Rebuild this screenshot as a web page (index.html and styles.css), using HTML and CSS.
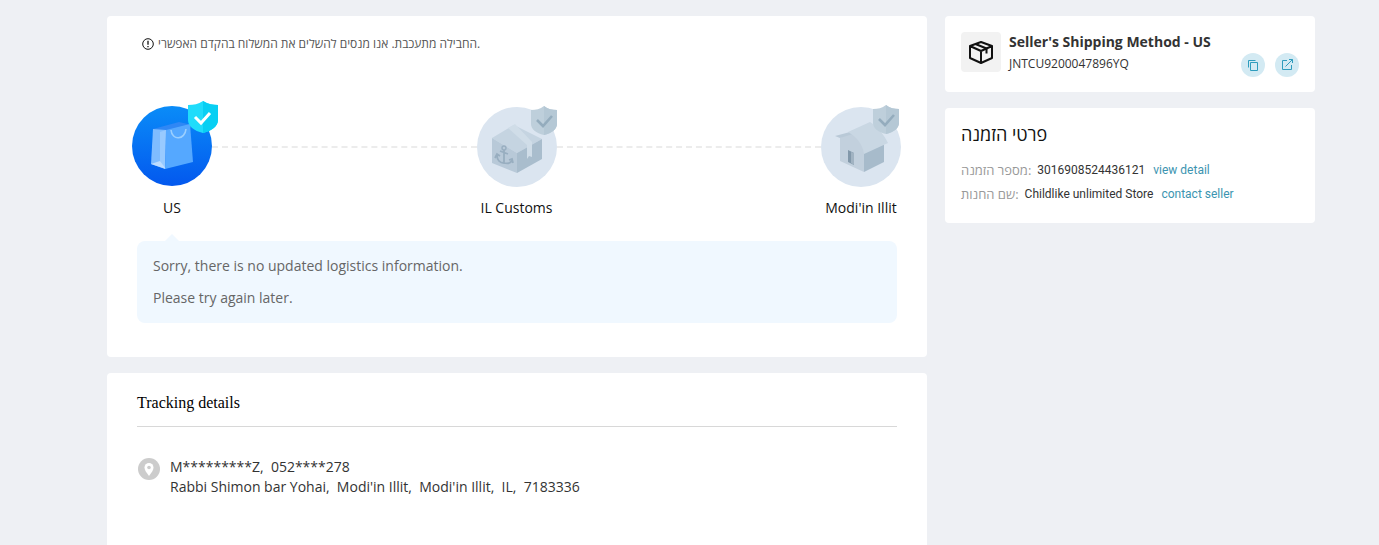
FILE: index.html
```html
<!DOCTYPE html>
<html lang="en">
<head>
  <meta charset="UTF-8" />
  <meta name="viewport" content="width=device-width, initial-scale=1.0"/>
  <title>Tracking details</title>
  <link rel="stylesheet" href="styles.css">
</head>
<body>
  <div class="page">
    <main class="main">
      <section class="card status">
        <p class="notice">
          <svg class="notice-icon" viewBox="0 0 12 12" fill="none" stroke="#111">
            <circle cx="6" cy="6" r="5.3"/>
            <path d="M6 2.8v4M6 8v1.3" stroke-width="1.3"/>
          </svg>
          <span lang="he">החבילה מתעכבת. אנו מנסים להשלים את המשלוח בהקדם האפשרי.</span>
        </p>

        <div class="steps">
          <div class="step">
            <svg class="step-icon" viewBox="0 0 80 80">
              <defs>
                <linearGradient id="blue" x1="0" y1="0" x2="0" y2="1">
                  <stop offset="0" stop-color="#0a8cf8"/>
                  <stop offset="1" stop-color="#0358ee"/>
                </linearGradient>
              </defs>
              <circle cx="40" cy="40" r="40" fill="url(#blue)"/>
              <path d="M21 23l26-7 13 3-3 5-22 2z" fill="#2f87f5"/>
              <path d="M21 23l13 1-1 39-14-5z" fill="#7fbcff"/>
              <path d="M28 26l6-2-1 39-5-8z" fill="#98caff"/>
              <path d="M19 58l9-3 6 8z" fill="#bcdcff"/>
              <path d="M34 24l24-6 3 38-28 7z" fill="#55a8ff"/>
              <path d="M39 24c1 11 14 10 15-1" fill="none" stroke="#9bcfff" stroke-width="1.6"/>
              <path d="M71-5c5 3 10 4 15 4v15c0 6-6 11-15 13-9-2-15-7-15-13V-1c6 0 10-1 15-4z" fill="#20dcfb"/>
              <path d="M71-5c5 3 10 4 15 4v15c0 6-6 11-15 13z" fill="#08cff3"/>
              <path d="M63 11l6 6 9-10" fill="none" stroke="#fff" stroke-width="3"/>
            </svg>
            <span class="step-name">US</span>
          </div>
          <div class="step-line"></div>
          <div class="step">
            <svg class="step-icon" viewBox="0 0 80 80">
              <circle cx="40" cy="41" r="40" fill="#dbe5f0"/>
              <path d="M15 32l22-13 28 14-25 14z" fill="#c5d4e1"/>
              <path d="M15 32l25 15v20L15 57z" fill="#b8c9d8"/>
              <path d="M40 47l25-14v20L40 67z" fill="#a9bdcd"/>
              <path d="M31 22l7-4 17 18v15l-3-1-2 3V39z" fill="#d0dde8"/>
              <path d="M27 44v13M23 45l8 3M20 49c0 5 3 8 7 8 4 1 7 0 8-3M18 52l2-4 3 2M32 54l3-1 1 4" fill="none" stroke="#98aec0" stroke-width="1.800"/>
              <circle cx="27" cy="42" r="2" fill="none" stroke="#98aec0" stroke-width="1.400"/>
              <path d="M67 0c4 3 8 4 13 4v14c0 5-5 9-13 11-8-2-13-6-13-11V4c5 0 9-1 13-4z" fill="#becfdb"/>
              <path d="M67 0c4 3 8 4 13 4v14c0 5-5 9-13 11z" fill="#b5c8d5"/>
              <path d="M60 14l6 6 9-10" fill="none" stroke="#94acbd" stroke-width="2.600"/>
            </svg>
            <span class="step-name">IL Customs</span>
          </div>
          <div class="step-line"></div>
          <div class="step">
            <svg class="step-icon" viewBox="0 0 80 80">
              <circle cx="40" cy="41" r="40" fill="#dbe5f0"/>
              <path d="M19 32l13-8 11 17v25L19 55z" fill="#c2d0dd"/>
              <path d="M43 47l20-9v18L43 66z" fill="#a7bbcb"/>
              <path d="M14 30l15-4 20-9-14 10-16 5z" fill="#b9c9d7"/>
              <path d="M27 26l22-10c8 5 14 13 18 21l-24 11c-1-9-7-17-16-22z" fill="#c9d7e3"/>
              <path d="M27 44l6 3v12l-6-3z" fill="#8298aa"/>
              <path d="M30 46l3 1v12l-3-2z" fill="#a1b3c2"/>
              <path d="M65-1c4 3 8 4 13 4v14c0 5-5 9-13 11-8-2-13-6-13-11V3c5 0 9-1 13-4z" fill="#becfdb"/>
              <path d="M65-1c4 3 8 4 13 4v14c0 5-5 9-13 11z" fill="#b5c8d5"/>
              <path d="M58 13l6 6 9-10" fill="none" stroke="#94acbd" stroke-width="2.600"/>
            </svg>
            <span class="step-name">Modi'in Illit</span>
          </div>
        </div>

        <div class="message">
          <p>Sorry, there is no updated logistics information.</p>
          <p>Please try again later.</p>
        </div>
      </section>

      <section class="card details">
        <h2 class="details-title">Tracking details</h2>
        <div class="address">
          <svg class="pin" viewBox="0 0 22 22">
            <circle cx="11" cy="11" r="11" fill="#ccc"/>
            <path d="M11 18c-3-4-4.500-6-4.500-8.500a4.500 4.500 0 0 1 9 0C15.500 12 14 14 11 18z" fill="#fff"/>
            <circle cx="11" cy="9.500" r="1.800" fill="#ccc"/>
          </svg>
          <p>M*********Z,&nbsp; 052****278<br>Rabbi Shimon bar Yohai,&nbsp; Modi'in Illit,&nbsp; Modi'in Illit,&nbsp; IL,&nbsp; 7183336</p>
        </div>
      </section>
    </main>

    <aside class="side">
      <section class="card shipping">
        <div class="shipping-logo">
          <svg viewBox="0 0 24 24" fill="none" stroke="#111" stroke-width="2" stroke-linejoin="round">
            <path d="M12 2l11 4v12l-11 5-11-5V6zM1 6l11 5 11-5M12 11v12"/>
            <path d="M6.500 4l11 4.500v5"/>
          </svg>
        </div>
        <div class="shipping-info">
          <h3>Seller's Shipping Method - US</h3>
          <p>JNTCU9200047896YQ</p>
        </div>
        <div class="actions">
          <button class="round-button" type="button" aria-label="Copy">
            <svg viewBox="0 0 12 12" fill="none" stroke="#2e9cbd">
              <path d="M3.500 3.500h7v8h-7z"/>
              <path d="M1.500 8.500v-7h7"/>
            </svg>
          </button>
          <button class="round-button" type="button" aria-label="Open">
            <svg viewBox="0 0 12 12" fill="none" stroke="#2e9cbd">
              <path d="M6 1.500H1.500v9h9V6M4.500 7.500l7-7M8 .5h3.500V4"/>
            </svg>
          </button>
        </div>
      </section>

      <section class="card order">
        <h3 class="order-title" lang="he">פרטי הזמנה</h3>
        <p class="order-row"><span class="label" lang="he">מספר הזמנה:</span><span>3016908524436121</span><a href="#">view detail</a></p>
        <p class="order-row"><span class="label" lang="he">שם החנות:</span><span>Childlike unlimited Store</span><a href="#">contact seller</a></p>
      </section>
    </aside>
  </div>
</body>
</html>
```
FILE: styles.css
```css
* {
  box-sizing: border-box;
}

body {
  margin: 0;
  background: #eef0f4;
  color: #333;
  font-family: "Open Sans", "Noto Sans", sans-serif;
  font-size: 12px;
}

h2, h3, p {
  margin: 0;
}

.page {
  display: flex;
  gap: 18px;
  min-height: 100vh;
  padding: 16px 64px 0 107px;
}

.main {
  flex: 1;
  display: flex;
  flex-direction: column;
  gap: 16px;
}

.side {
  width: 370px;
  display: flex;
  flex-direction: column;
  gap: 16px;
}

.card {
  background: #fff;
  border-radius: 4px;
}

/* status */
.status {
  padding: 20px 30px 34px;
}

.notice {
  display: flex;
  align-items: center;
  gap: 4px;
  padding-left: 5px;
  line-height: 16px;
  color: #555;
}

.notice-icon {
  width: 12px;
  height: 12px;
}

.steps {
  display: flex;
  margin: 54px -4px 0 -5px;
}

.step {
  width: 80px;
  text-align: center;
  color: #111;
}

.step-icon {
  display: block;
  width: 80px;
  height: 80px;
  margin-bottom: 12px;
  overflow: visible;
}

.step-name {
  font-size: 14px;
  line-height: 20px;
  white-space: nowrap;
}

.step-line {
  flex: 1;
  height: 42px;
  border-bottom: 2px dashed #ececec;
}

.message {
  position: relative;
  margin-top: 23px;
  padding: 9px 16px;
  background: #f0f8ff;
  border-radius: 8px;
  color: #666;
  font-size: 14px;
  line-height: 32px;
}

.message::before {
  content: "";
  position: absolute;
  left: 28px;
  top: -7px;
  border: 7px solid transparent;
  border-top: 0;
  border-bottom-color: #f0f8ff;
}

/* tracking details */
.details {
  flex: 1;
  padding: 20px 30px 0;
  border-radius: 4px 4px 0 0;
}

.details-title {
  padding-bottom: 13px;
  border-bottom: 1px solid #d8d8d8;
  color: #000;
  font-family: "Liberation Serif", serif;
  font-size: 16px;
  font-weight: normal;
  line-height: 20px;
}

.address {
  display: flex;
  gap: 10px;
  padding: 30px 1px;
  font-size: 14px;
  line-height: 20px;
}

.pin {
  width: 22px;
  height: 22px;
  margin-top: 1px;
}

/* shipping */
.shipping {
  display: flex;
  gap: 8px;
  padding: 16px 16px 15px;
}

.shipping-logo {
  display: flex;
  align-items: center;
  justify-content: center;
  width: 40px;
  height: 40px;
  background: #f2f2f2;
  border-radius: 4px;
}

.shipping-logo svg {
  width: 24px;
  height: 24px;
}

.shipping-info {
  flex: 1;
  white-space: nowrap;
}

.shipping-info h3 {
  font-size: 14px;
  line-height: 20px;
}

.shipping-info p {
  padding-bottom: 1px;
  line-height: 24px;
}

.actions {
  display: flex;
  align-items: flex-end;
  gap: 10px;
}

.round-button {
  display: flex;
  align-items: center;
  justify-content: center;
  width: 24px;
  height: 24px;
  padding: 0;
  border: none;
  border-radius: 50%;
  background: #d3eaf3;
  cursor: pointer;
}

.round-button svg {
  width: 12px;
  height: 12px;
}

/* order */
.order {
  padding: 16px 16px 17px;
}

.order-title {
  margin-bottom: 14px;
  color: #111;
  font-size: 18px;
  font-weight: normal;
  line-height: 20px;
}

.order-row {
  display: flex;
  font-family: Roboto, "Open Sans", sans-serif;
  line-height: 24px;
}

.order-row .label {
  margin-right: 6px;
  color: #999;
  font-family: "Open Sans", sans-serif;
  font-size: 13px;
}

.order-row a {
  margin-left: 8px;
  color: #3c94b0;
  text-decoration: none;
}
```
